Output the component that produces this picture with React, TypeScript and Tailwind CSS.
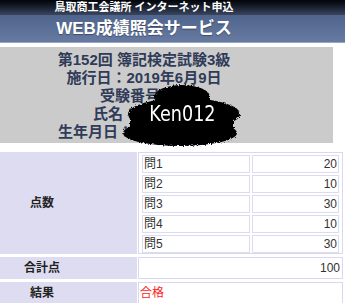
const scores = [
  { q: '問1', pt: 20 },
  { q: '問2', pt: 10 },
  { q: '問3', pt: 30 },
  { q: '問4', pt: 10 },
  { q: '問5', pt: 30 },
]

const Blob = () => (
  <svg className="absolute left-[118px] top-[82px]" width="128" height="66" viewBox="0 0 128 66">
    <defs>
      <filter id="rough" x="-10%" y="-10%" width="120%" height="120%">
        <feTurbulence type="fractalNoise" baseFrequency="0.6" numOctaves="2" seed="3" />
        <feDisplacementMap in="SourceGraphic" scale="4" />
      </filter>
    </defs>
    <g fill="#050505" filter="url(#rough)">
      <ellipse cx="64" cy="15" rx="28" ry="12" />
      <ellipse cx="66" cy="32" rx="56" ry="16" />
      <ellipse cx="62" cy="51" rx="57" ry="13" />
      <rect x="12" y="24" width="104" height="32" rx="10" />
    </g>
  </svg>
)

const App = () => {
  return (
    <div className="relative w-[345px] h-[303px] overflow-hidden bg-white font-['Liberation_Sans','Noto_Sans_CJK_JP',sans-serif] text-[#333]">
      {/* ヘッダー */}
      <div className="h-[15px] bg-gradient-to-b from-[#03050a] to-[#3a465f]">
        <div className="w-[288px] text-center text-[11px] leading-[15px] font-bold text-white">鳥取商工会議所 インターネット申込</div>
      </div>
      <div className="h-[28px] bg-gradient-to-b from-[#4f648c] to-[#677ba2] border-b border-[#98a6c2]">
        <div className="w-[288px] text-center text-[17px] leading-[27px] font-bold text-white [text-shadow:0_1px_1px_rgba(0,0,0,0.35)]">
          WEB成績照会サービス
        </div>
      </div>

      {/* 受験者情報 */}
      <div className="mt-[4px] w-[333px] h-[96px] bg-[#cbcbcb] pt-[4px]">
        <div className="w-[288px] text-center text-[15px] leading-[18px] font-bold text-[#2f3b58]">
          <div>第152回 簿記検定試験3級</div>
          <div>施行日：2019年6月9日</div>
          <div>受験番号：<span className="inline-block w-[13px]" /></div>
          <div>氏名：<span className="inline-block w-[57px]" /></div>
          <div>生年月日：<span className="inline-block w-[97px]" /></div>
        </div>
      </div>
      <Blob />
      <div className="absolute left-[152px] top-[101px] w-[60px] flex justify-center">
        <span className="text-[22px] leading-[26px] text-white scale-x-[0.8] font-['DejaVu_Sans',sans-serif]">Ken012</span>
      </div>

      {/* 成績表 */}
      <div className="mt-[9px] flex flex-col gap-[3px] w-[343px]">
        <div className="flex gap-[1px] h-[102px]">
          <div className="w-[137px] bg-[#dddcf0] flex items-center">
            <div className="w-[84px] text-center text-[12px] font-bold text-[#222]">点数</div>
          </div>
          <div className="flex-1 border border-[#dad8ee] pt-[2px] px-[3px] flex flex-col gap-[2px]">
            {scores.map((s) => (
              <div key={s.q} className="flex gap-[2px] h-[18px]">
                <div className="w-[108px] border border-[#dddbef] text-[12px] leading-[16px] pl-[1px]">{s.q}</div>
                <div className="w-[87px] border border-[#dddbef] text-[12px] leading-[16px] text-right pr-[1px]">{s.pt}</div>
              </div>
            ))}
          </div>
        </div>
        <div className="flex gap-[1px] h-[22px]">
          <div className="w-[137px] bg-[#dddcf0] flex items-center">
            <div className="w-[84px] text-center text-[12px] font-bold text-[#222]">合計点</div>
          </div>
          <div className="flex-1 border border-[#dad8ee] text-[12px] leading-[20px] text-right pr-[2px]">100</div>
        </div>
        <div className="flex gap-[1px] h-[22px]">
          <div className="w-[137px] bg-[#dddcf0] flex items-center">
            <div className="w-[84px] text-center text-[12px] font-bold text-[#222]">結果</div>
          </div>
          <div className="flex-1 border border-[#dad8ee] text-[12px] leading-[20px] pl-[1px] text-[#ff1a1a]">合格</div>
        </div>
      </div>
    </div>
  )
}

export default App
